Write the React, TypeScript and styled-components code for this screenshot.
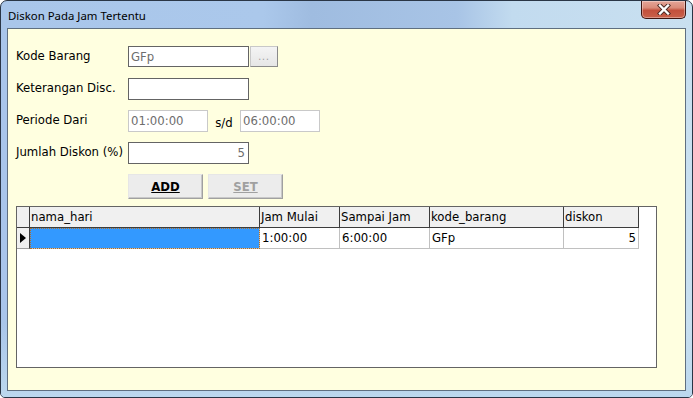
import styled, { createGlobalStyle } from "styled-components";

const GlobalStyle = createGlobalStyle`
    html, body{
        margin: 0;
        padding: 0;
        background: #ffffff;
    }
    body{
        font-family: "DejaVu Sans Condensed", "DejaVu Sans", sans-serif;
        font-size: 13px;
        color: #000;
    }
`;

const Window = styled.div`
    width: 693px;
    height: 398px;
    box-sizing: border-box;
    border: 1px solid #2a3646;
    border-radius: 7px 7px 5px 5px;
    overflow: hidden;
    display: flex;
    flex-direction: column;
    background: linear-gradient(90deg, #a9c6ea 0%, #abc8eb 38%, #9fbce0 45%, #a8c4e6 66%, #c2dbef 74%, #c9e0f0 100%);
`;

const TitleBar = styled.div`
    height: 27px;
    display: flex;
    align-items: flex-start;
    justify-content: space-between;
    padding-left: 7px;
    padding-right: 6px;
`;

const Title = styled.span`
    font-family: "Noto Sans", "Open Sans", sans-serif;
    font-size: 11.4px;
    line-height: 29px;
    color: #000;
`;

const CloseButton = styled.div`
    width: 45px;
    height: 18px;
    box-sizing: border-box;
    border: 1px solid #3e1510;
    border-top: none;
    border-radius: 0 0 5px 5px;
    background: linear-gradient(180deg, #e4a598 0%, #d98b79 40%, #c2503c 55%, #c9614a 100%);
    display: flex;
    align-items: center;
    justify-content: center;
    box-shadow: inset 0 0 0 1px rgba(255,255,255,0.35);
`;

const Frame = styled.div`
    flex: 1;
    display: flex;
    padding: 0 6px 6px 6px;
    background: linear-gradient(180deg, transparent 0%, transparent 80%, #bcd8ee 100%);
`;

const Client = styled.div`
    flex: 1;
    border: 1px solid #5f6f80;
    background: #ffffe0;
    padding: 17px 0 0 8px;
    display: flex;
    flex-direction: column;
`;

const Form = styled.div`
    display: flex;
    flex-direction: column;
    gap: 10px;
`;

const Row = styled.div`
    display: flex;
    align-items: flex-start;
    height: 22px;
`;

const Label = styled.div`
    width: 112px;
    line-height: 16px;
    padding-top: 2px;
    white-space: nowrap;
`;

const Input = styled.div<{ $w: number; $disabled?: boolean; $right?: boolean }>`
    width: ${(p) => p.$w}px;
    height: 22px;
    box-sizing: border-box;
    border: 1px solid ${(p) => (p.$disabled ? "#c9c9c9" : "#646464")};
    background: #ffffff;
    color: #6d6d6d;
    line-height: 19px;
    padding: 0 3px 0 2px;
    text-align: ${(p) => (p.$right ? "right" : "left")};
`;

const DotsButton = styled.div`
    width: 28px;
    height: 21px;
    margin-left: 1px;
    box-sizing: border-box;
    border: 1px solid #8a8a8a;
    border-top-color: #c8c8c8;
    border-left-color: #c8c8c8;
    background: linear-gradient(180deg, #f4f4f4, #e6e6e6);
    color: #9a9a9a;
    font-size: 10px;
    text-align: center;
    line-height: 20px;
    letter-spacing: 1px;
`;

const Sep = styled.div`
    width: 32px;
    text-align: center;
    line-height: 25px;
`;

const Buttons = styled.div`
    display: flex;
    gap: 5px;
    padding-left: 112px;
    height: 25px;
`;

const Button = styled.div<{ $disabled?: boolean }>`
    width: 75px;
    height: 25px;
    box-sizing: border-box;
    border: 1px solid #a0a0a0;
    border-top-color: #e6e6e6;
    border-left-color: #e6e6e6;
    box-shadow: inset -1px -1px 0 #c8c8c8;
    background: #ececec;
    font-weight: bold;
    text-decoration: underline;
    text-align: center;
    line-height: 23px;
    color: ${(p) => (p.$disabled ? "#a0a0a0" : "#000")};
`;

const Grid = styled.div`
    margin-top: 7px;
    width: 641px;
    height: 162px;
    box-sizing: border-box;
    border: 1px solid #646464;
    background: #ffffff;
`;

const GridRow = styled.div`
    display: grid;
    grid-template-columns: 13px 230px 80px 90px 134px 75px;
    height: 21px;
`;

const HeadCell = styled.div`
    box-sizing: border-box;
    background: #f0f0f0;
    border-right: 1px solid #3c3c3c;
    border-bottom: 1px solid #3c3c3c;
    padding-left: 1px;
    line-height: 20px;
    white-space: nowrap;
    overflow: hidden;
`;

const RowHead = styled.div`
    box-sizing: border-box;
    background: #f0f0f0;
    border-right: 1px solid #3c3c3c;
    border-bottom: 1px solid #a0a0a0;
    display: flex;
    align-items: center;
    padding-left: 3px;
`;

const Cell = styled.div<{ $right?: boolean; $selected?: boolean }>`
    box-sizing: border-box;
    border-right: 1px solid #c0c0c0;
    border-bottom: 1px solid #c0c0c0;
    padding: 0 2px 0 2px;
    line-height: 20px;
    text-align: ${(p) => (p.$right ? "right" : "left")};
    white-space: nowrap;
    overflow: hidden;
    ${(p) =>
        p.$selected &&
        `
        background: #3399ff;
        outline: 1px dotted #b0702a;
        outline-offset: -1px;
    `}
`;

const Arrow = styled.div`
    width: 0;
    height: 0;
    border-top: 5px solid transparent;
    border-bottom: 5px solid transparent;
    border-left: 6px solid #000;
`;

type row = { nama_hari: string; jam_mulai: string; sampai_jam: string; kode_barang: string; diskon: number };

const rows: row[] = [
    { nama_hari: "", jam_mulai: "1:00:00", sampai_jam: "6:00:00", kode_barang: "GFp", diskon: 5 },
];

function App() {
    return (
        <>
            <GlobalStyle />
            <Window>
                <TitleBar>
                    <Title>Diskon Pada Jam Tertentu</Title>
                    <CloseButton>
                        <svg width="14" height="11" viewBox="0 0 14 11">
                            <path d="M3 1.5 L11 9.5 M11 1.5 L3 9.5" stroke="#4a2a24" strokeWidth="4.2" strokeLinecap="square" />
                            <path d="M3 1.5 L11 9.5 M11 1.5 L3 9.5" stroke="#ffffff" strokeWidth="2.4" strokeLinecap="square" />
                        </svg>
                    </CloseButton>
                </TitleBar>
                <Frame>
                    <Client>
                        <Form>
                            <Row>
                                <Label>Kode Barang</Label>
                                <Input $w={121} style={{ height: 21 }}>GFp</Input>
                                <DotsButton>...</DotsButton>
                            </Row>
                            <Row>
                                <Label>Keterangan Disc.</Label>
                                <Input $w={121}></Input>
                            </Row>
                            <Row>
                                <Label>Periode Dari</Label>
                                <Input $w={80} $disabled>01:00:00</Input>
                                <Sep>s/d</Sep>
                                <Input $w={80} $disabled>06:00:00</Input>
                            </Row>
                            <Row>
                                <Label>Jumlah Diskon (%)</Label>
                                <Input $w={121} $right>5</Input>
                            </Row>
                            <Buttons>
                                <Button>ADD</Button>
                                <Button $disabled>SET</Button>
                            </Buttons>
                        </Form>
                        <Grid>
                            <GridRow>
                                <HeadCell></HeadCell>
                                <HeadCell>nama_hari</HeadCell>
                                <HeadCell>Jam Mulai</HeadCell>
                                <HeadCell>Sampai Jam</HeadCell>
                                <HeadCell>kode_barang</HeadCell>
                                <HeadCell>diskon</HeadCell>
                            </GridRow>
                            {rows.map((item, i) => (
                                <GridRow key={i}>
                                    <RowHead><Arrow /></RowHead>
                                    <Cell $selected>{item.nama_hari}</Cell>
                                    <Cell>{item.jam_mulai}</Cell>
                                    <Cell>{item.sampai_jam}</Cell>
                                    <Cell>{item.kode_barang}</Cell>
                                    <Cell $right>{item.diskon}</Cell>
                                </GridRow>
                            ))}
                        </Grid>
                    </Client>
                </Frame>
            </Window>
        </>
    );
}

export default App;
